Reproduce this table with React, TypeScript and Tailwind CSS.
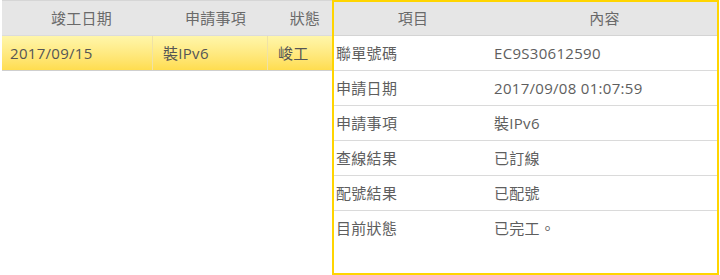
import { FC } from "react";

interface DetailRow {
  label: string;
  value: string;
}

const details: DetailRow[] = [
  { label: "聯單號碼", value: "EC9S30612590" },
  { label: "申請日期", value: "2017/09/08 01:07:59" },
  { label: "申請事項", value: "裝IPv6" },
  { label: "查線結果", value: "已訂線" },
  { label: "配號結果", value: "已配號" },
  { label: "目前狀態", value: "已完工。" },
];

const font = "font-['Open_Sans','Noto_Sans_CJK_TC',sans-serif] text-[15px] tracking-[0.3px]";

const App: FC = () => {
  return (
    <div className={`flex w-[720px] h-[275px] bg-white text-[#5e5e5e] ${font}`}>
      {/* 申請單列表 */}
      <div className="w-[332px] h-full pl-[2px]">
        <div className="flex h-[36px] items-center bg-[#e6e6e6] border-t border-[#d6d6d6] border-b border-b-[#dcdcdc] text-[#6a6a6a]">
          <div className="w-[151px] pl-[8px] text-center">竣工日期</div>
          <div className="w-[115px] pl-[10px] text-center">申請事項</div>
          <div className="flex-1 pl-[10px] text-center">狀態</div>
        </div>
        <div className="flex h-[35px] items-center border-b border-[#cfcfcf] bg-gradient-to-b from-[#fff6aa] to-[#ffdd4e] text-[#555]">
          <div className="w-[151px] h-full flex items-center pl-[8px] border-r border-[#efe2a6]">2017/09/15</div>
          <div className="w-[115px] h-full flex items-center pl-[10px] border-r border-[#efe2a6]">裝IPv6</div>
          <div className="flex-1 h-full flex items-center pl-[10px]">峻工</div>
        </div>
      </div>

      {/* 申請單明細 */}
      <div className="w-[387px] h-[275px] border-2 border-[#ffd500] flex flex-col">
        <div className="flex h-[34px] shrink-0 items-center bg-[#e6e6e6] border-b border-[#d4d4d4] text-[#6a6a6a]">
          <div className="w-[158px] text-center">項目</div>
          <div className="flex-1 text-center">內容</div>
        </div>
        {details.map((row, index) => (
          <div
            key={index}
            className={`flex h-[35px] shrink-0 items-center ${index < details.length - 1 ? "border-b border-[#dadada]" : ""}`}
          >
            <div className="w-[158px] pl-[2px]">{row.label}</div>
            <div className="flex-1 pl-[2px]">{row.value}</div>
          </div>
        ))}
      </div>
    </div>
  );
};

export default App;
